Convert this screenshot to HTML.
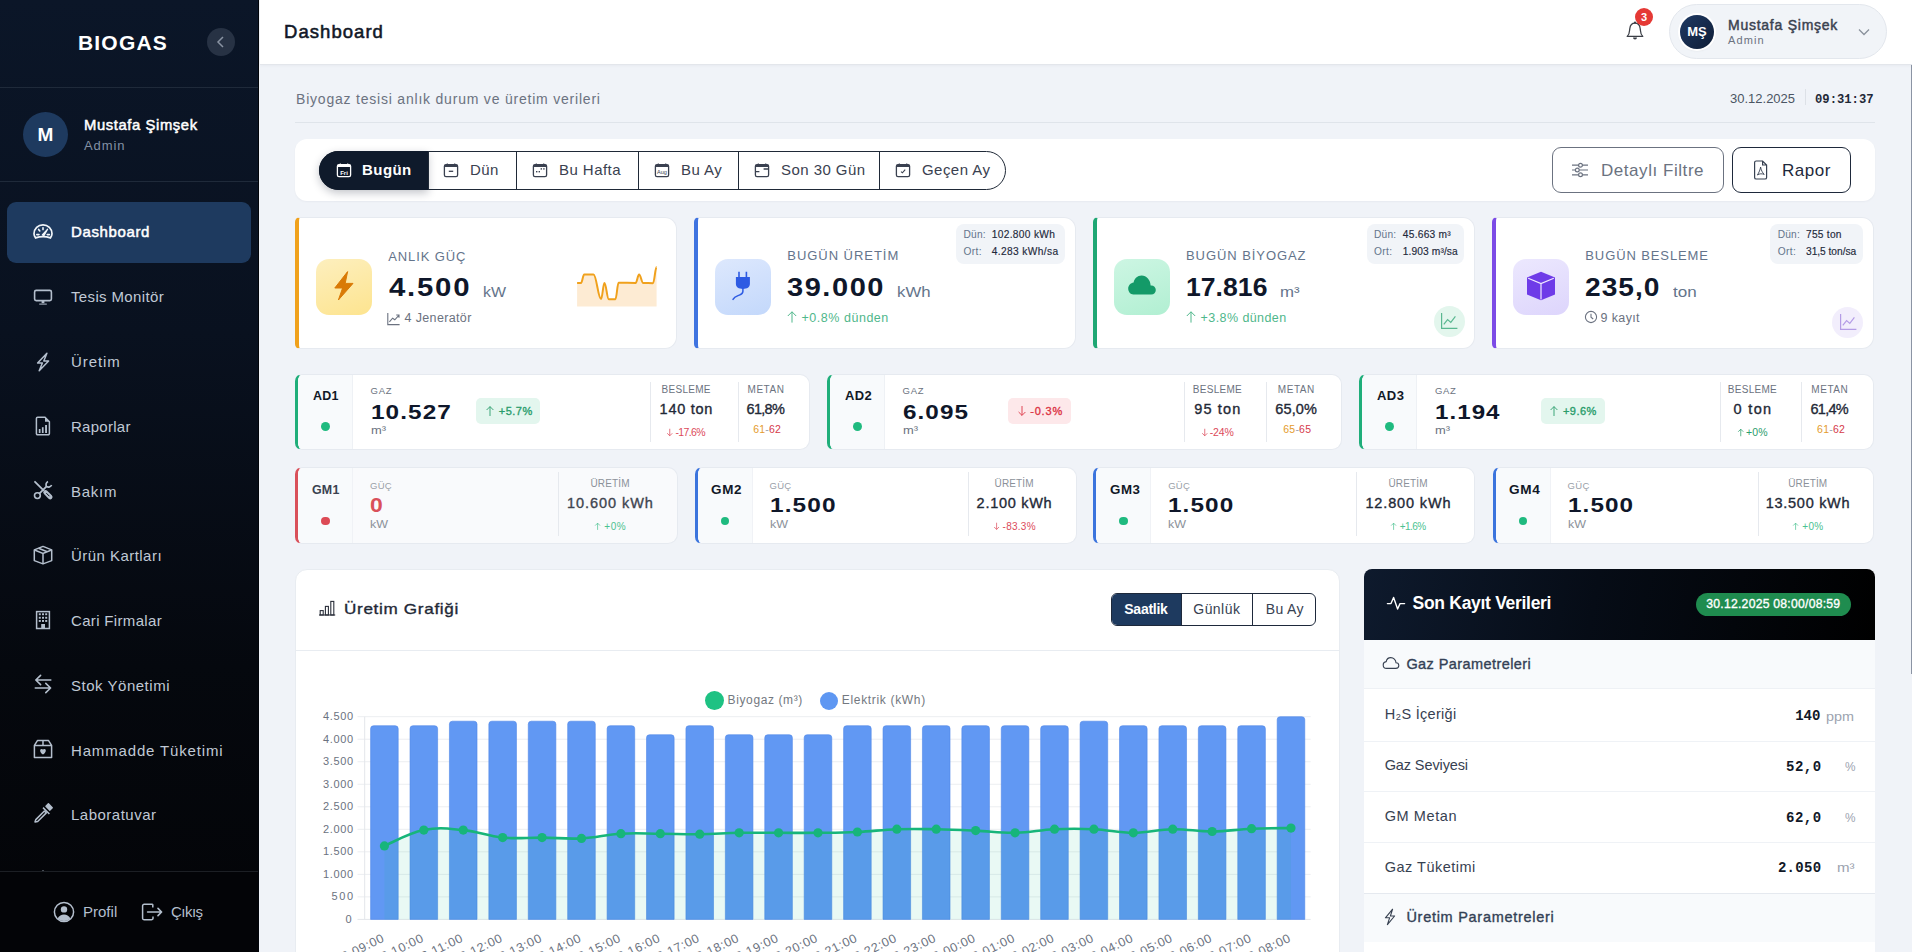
<!DOCTYPE html>
<html lang="tr">
<head>
<meta charset="utf-8">
<title>Dashboard</title>
<style>
*{box-sizing:border-box;margin:0;padding:0}
html,body{width:1912px;height:952px;overflow:hidden}
body{font-family:"Liberation Sans",sans-serif;background:#f0f3f8;color:#0f172a;position:relative}
.abs{position:absolute}
/* sidebar */
#sb{position:absolute;left:0;top:0;width:259px;height:952px;background:linear-gradient(180deg,#0b1628 0%,#09111f 35%,#05080e 70%,#030407 100%);border-right:1px solid #02050a;overflow:hidden}
#sb .logo{position:absolute;left:0;top:31px;width:246px;text-align:center;color:#fff;font-weight:bold;font-size:21px;letter-spacing:1.2px}
#sb .coll{position:absolute;left:207px;top:28px;width:28px;height:28px;border-radius:50%;background:#273244}
#sb .hr{position:absolute;left:0;width:259px;height:1px;background:#1f2a3a}
#sb .av{position:absolute;left:23px;top:112px;width:45px;height:45px;border-radius:50%;background:#1e3a5f;color:#fff;font-weight:bold;font-size:19px;text-align:center;line-height:45px}
#sb .nm{position:absolute;left:84px;top:117px;color:#fff;font-size:14.8px;-webkit-text-stroke:0.5px #fff;white-space:nowrap;letter-spacing:0.6px}
#sb .rl{position:absolute;left:84px;top:138px;color:#8391a4;font-size:13px;letter-spacing:0.9px}
.nav{position:absolute;left:7px;width:244px;height:61px;border-radius:9px}
.nav.act{background:#1e3a5f}
.nav svg{position:absolute;left:26px;top:20px}
.nav span{position:absolute;left:64px;top:21px;font-size:15px;color:#c4cdd8;white-space:nowrap}
.nav.act span{color:#fff;font-weight:bold}
#sb .foot{position:absolute;left:0;top:871px;width:259px;height:81px;background:#030407;border-top:1px solid #1c1f24}

#sb .actbg{position:absolute;left:7px;top:202px;width:244px;height:61px;border-radius:9px;background:#1e3a5f}
#sb .ic{position:absolute}
#sb .nt{position:absolute;left:71px;font-size:15px;line-height:19px;color:#c0c9d5;white-space:nowrap;letter-spacing:0.3px}
#sb .nt.a{letter-spacing:0}
#sb .nt.a{color:#fff;font-weight:normal;-webkit-text-stroke:0.5px #fff}
#sb .ft{position:absolute;font-size:15px;line-height:19px;color:#b4bfcd}
/* topbar */
#tb{position:absolute;left:260px;top:0;width:1652px;height:65px;background:#fff;border-bottom:1px solid #e3e6eb;box-shadow:0 1px 3px rgba(15,23,42,.04);z-index:1}

#tb .ttl{position:absolute;left:24px;top:20.5px;font-size:18.5px;line-height:22px;color:#111827;-webkit-text-stroke:0.55px #111827;letter-spacing:1.05px}
#tb .bell{position:absolute;left:1365px;top:17.5px}
#tb .badge{position:absolute;left:1375px;top:8px;width:18px;height:18px;border-radius:50%;background:#e53935;color:#fff;font-size:11px;font-weight:bold;text-align:center;line-height:18px}
#tb .pill{position:absolute;left:1409px;top:4px;width:218px;height:55px;border-radius:28px;background:#f1f4f8;border:1px solid #e3e7ed}
#tb .pav{position:absolute;left:10px;top:10px;width:34px;height:34px;border-radius:50%;background:linear-gradient(135deg,#1e3a64,#0f1d36);color:#fff;font-weight:bold;font-size:13px;text-align:center;line-height:34px;box-shadow:0 0 0 2px #fff,0 1px 3px rgba(0,0,0,.15)}
#tb .pnm{position:absolute;left:58px;top:11.5px;font-size:14px;line-height:16px;color:#3a4250;-webkit-text-stroke:0.45px #3a4250;white-space:nowrap;letter-spacing:0.75px}
#tb .prl{position:absolute;left:58px;top:28.5px;font-size:11px;line-height:13px;color:#6b7280;letter-spacing:1.1px}
.sub{position:absolute;left:296px;top:91px;font-size:14px;line-height:16px;color:#6b7280;letter-spacing:0.79px}
.dt{position:absolute;left:1730px;top:91px;font-size:13px;line-height:15px;color:#4b5563}
.dsep{position:absolute;left:1805px;top:89px;width:1px;height:16px;background:#dde1e7}
.tm{position:absolute;left:1815px;top:92.5px;font-family:"Liberation Mono",monospace;font-weight:bold;font-size:12.2px;line-height:15px;color:#1f2937}
.hdiv{position:absolute;left:295px;top:122px;width:1580px;height:1px;background:#dfe4ea}
.card{position:absolute;background:#fff;border-radius:12px;border:1px solid #e6eaf0}


.t{position:absolute;white-space:nowrap}
.kc{position:absolute;top:217px;width:382px;height:132px;background:#fff;border-radius:5px 12px 12px 5px;border:1px solid #e6eaf0;border-left:4px solid #f59e0b}
.kib{position:absolute;top:259px;width:56px;height:56px;border-radius:13px}
.kinfo{position:absolute;top:224px;height:40px;border-radius:8px;background:#f1f4f8}
.ktr{position:absolute;width:31px;height:31px;border-radius:50%}

.adc{position:absolute;top:374px;height:76px;background:#fff;border-radius:7px 10px 10px 7px;border:1px solid #e6eaf0;border-left:3px solid #1fae7a;overflow:hidden}
.adn{position:absolute;left:0;top:0;width:55px;height:100%;background:#f8fafc;border-right:1px solid #eef1f5}
.gmc{position:absolute;top:467px;height:77px;background:#fff;border-radius:7px 10px 10px 7px;border:1px solid #e6eaf0;border-left:3px solid #3b74dd;overflow:hidden}
.vdiv{position:absolute;width:1px;background:#e6e9ee}
.dot{position:absolute;width:9px;height:9px;border-radius:50%}

.ccard{position:absolute;left:295px;top:569px;width:1045px;height:400px;background:#fff;border-radius:12px;border:1px solid #e8ecf1}
.panel{position:absolute;left:1364px;top:569px;width:511px;height:400px;background:#fff;border-radius:8px;overflow:hidden}
/*KPICSS*/
.ftx{position:absolute;top:161px;font-size:15px;line-height:18px;white-space:nowrap;letter-spacing:0.45px}
#main{position:absolute;left:260px;top:65px;width:1652px;height:887px;background:#f0f3f8}
</style>
</head>
<body>
<div id="sb">
  <div class="logo">BIOGAS</div>
  <div class="coll"><svg width="28" height="28" viewBox="0 0 28 28"><path d="M16 9 L11 14 L16 19" fill="none" stroke="#8a94a3" stroke-width="1.5"/></svg></div>
  <div class="hr" style="top:87px"></div>
  <div class="av">M</div>
  <div class="nm">Mustafa Şimşek</div>
  <div class="rl">Admin</div>
  <div class="hr" style="top:181px"></div>
  <div class="actbg"></div>
<svg class="ic" style="left:28px;top:216.0px" width="30" height="30" viewBox="0 0 30 30"><path d="M7.6,21.9 C6.5,20.4 6,19.2 6,17.8 A9,9 0 0 1 24,17.8 C24,19.2 23.5,20.4 22.4,21.9 C17.5,20.2 12.5,20.2 7.6,21.9 Z" fill="none" stroke="#f1f5f9" stroke-width="1.7"/><path d="M15,11.8 V13.6 M10.6,13.4 L11.8,14.9 M8.8,18.6 H11 M19.2,18.6 H21.4" stroke="#f1f5f9" stroke-width="1.6" stroke-linecap="round"/><path d="M14.3,19 L19.6,13.2 L15.9,19.6 Z" fill="#f1f5f9" stroke="#f1f5f9" stroke-width="1.2" stroke-linejoin="round"/></svg>
<div class="nt a" style="top:221.5px;letter-spacing:0.62px">Dashboard</div>
<svg class="ic" style="left:28px;top:280.8px" width="30" height="30" viewBox="0 0 30 30"><rect x="6.6" y="9.4" width="16.8" height="10.2" rx="1.6" fill="none" stroke="#b4bfcd" stroke-width="1.6"/><path d="M13.6,20 H16.4 V22.2 H13.6 Z" fill="#b4bfcd"/><path d="M11.2,22.6 H18.8 V23.6 H11.2 Z" fill="#b4bfcd"/></svg>
<div class="nt" style="top:287.2px;letter-spacing:0.36px">Tesis Monitör</div>
<svg class="ic" style="left:28px;top:345.5px" width="30" height="30" viewBox="0 0 30 30"><path d="M18.9,7.2 L9.6,17 H14.4 L11.2,24.8 L20.6,15 H15.8 Z" fill="none" stroke="#b4bfcd" stroke-width="1.5" stroke-linejoin="round"/></svg>
<div class="nt" style="top:352.0px;letter-spacing:0.91px">Üretim</div>
<svg class="ic" style="left:28px;top:410.2px" width="30" height="30" viewBox="0 0 30 30"><path d="M9.6,7.3 H17 L21.4,11.8 V23.6 A1.2,1.2 0 0 1 20.2,24.8 H9.6 A1.2,1.2 0 0 1 8.4,23.6 V8.5 A1.2,1.2 0 0 1 9.6,7.3 Z" fill="none" stroke="#b4bfcd" stroke-width="1.5"/><path d="M17,7.3 V11.8 H21.4 Z" fill="#b4bfcd"/><rect x="10.8" y="19" width="1.7" height="4" fill="#b4bfcd"/><rect x="13.9" y="17.2" width="1.7" height="5.8" fill="#b4bfcd"/><rect x="17.1" y="15" width="1.9" height="8" fill="#b4bfcd"/></svg>
<div class="nt" style="top:416.8px;letter-spacing:0.28px">Raporlar</div>
<svg class="ic" style="left:28px;top:475.0px" width="30" height="30" viewBox="0 0 30 30"><path d="M7,6.8 L15.6,15.4" stroke="#b4bfcd" stroke-width="1.8" stroke-linecap="round"/><path d="M17.6,17.4 L22.2,22" stroke="#b4bfcd" stroke-width="4.6" stroke-linecap="round"/><path d="M18.6,18.4 L21.2,21" stroke="#070d18" stroke-width="1" stroke-linecap="round"/><path d="M11.3,18.7 L18.8,11.2" stroke="#b4bfcd" stroke-width="1.8"/><circle cx="9.4" cy="20.6" r="2.9" fill="none" stroke="#b4bfcd" stroke-width="1.6"/><path d="M20,6.4 A3.6,3.6 0 0 0 18.6,11.6 A3.6,3.6 0 0 0 23.6,10" fill="none" stroke="#b4bfcd" stroke-width="1.7"/></svg>
<div class="nt" style="top:481.5px;letter-spacing:0.75px">Bakım</div>
<svg class="ic" style="left:28px;top:539.8px" width="30" height="30" viewBox="0 0 30 30"><path d="M15,6.4 L23.7,9.9 V20.6 L15,23.9 L6.3,20.6 V9.9 Z" fill="none" stroke="#b4bfcd" stroke-width="1.5" stroke-linejoin="round"/><path d="M6.5,10 L15,13.5 L23.5,10 M15,13.5 V23.8 M10.6,8.2 L19.2,11.7" fill="none" stroke="#b4bfcd" stroke-width="1.5"/></svg>
<div class="nt" style="top:546.2px;letter-spacing:0.46px">Ürün Kartları</div>
<svg class="ic" style="left:28px;top:604.5px" width="30" height="30" viewBox="0 0 30 30"><rect x="8.6" y="6.6" width="12.8" height="16.9" fill="none" stroke="#b4bfcd" stroke-width="1.5"/><g fill="#b4bfcd"><rect x="10.8" y="8.3" width="2" height="1.9"/><rect x="14" y="8.3" width="2" height="1.9"/><rect x="17.2" y="8.3" width="2" height="1.9"/><rect x="10.8" y="11.8" width="2" height="1.9"/><rect x="14" y="11.8" width="2" height="1.9"/><rect x="17.2" y="11.8" width="2" height="1.9"/><rect x="10.8" y="15" width="2" height="1.9"/><rect x="14" y="15" width="2" height="1.9"/><rect x="17.2" y="15" width="2" height="1.9"/><rect x="13.2" y="19" width="3.8" height="4.5"/></g></svg>
<div class="nt" style="top:611.0px;letter-spacing:0.33px">Cari Firmalar</div>
<svg class="ic" style="left:28px;top:669.2px" width="30" height="30" viewBox="0 0 30 30"><path d="M22.8,11 H7.8 M12.6,6.4 L7.8,11 L12.6,15.6 M7.3,19 H22.6 M17.8,14.4 L22.6,19 L17.8,23.6" fill="none" stroke="#b4bfcd" stroke-width="1.6" stroke-linecap="round" stroke-linejoin="round"/></svg>
<div class="nt" style="top:675.8px;letter-spacing:0.52px">Stok Yönetimi</div>
<svg class="ic" style="left:28px;top:734.0px" width="30" height="30" viewBox="0 0 30 30"><path d="M6.4,11.4 L9.6,6.4 H20.4 L23.6,11.4 V23.6 H6.4 Z M6.4,11.4 H23.6 M15,6.4 V11.4" fill="none" stroke="#b4bfcd" stroke-width="1.5" stroke-linejoin="round"/><path d="M15,20.6 C11.4,18.2 11.6,15 13.6,15 C14.4,15 15,15.6 15,16.2 C15,15.6 15.6,15 16.4,15 C18.4,15 18.6,18.2 15,20.6 Z" fill="#b4bfcd"/></svg>
<div class="nt" style="top:740.5px;letter-spacing:0.84px">Hammadde Tüketimi</div>
<svg class="ic" style="left:28px;top:798.8px" width="30" height="30" viewBox="0 0 30 30"><path d="M7,22.9 L7.8,20.6 L16.4,12 L18.3,13.9 L9.7,22.5 Z" fill="none" stroke="#b4bfcd" stroke-width="1.5" stroke-linejoin="round"/><path d="M15,8.6 L21.4,15 M18,7.2 L20.4,4.9 L24.2,8.7 L21.9,11.1 Z" fill="#b4bfcd" stroke="#b4bfcd" stroke-width="1.5" stroke-linejoin="round"/></svg>
<div class="nt" style="top:805.2px;letter-spacing:0.49px">Laboratuvar</div>
  <svg class="ic" style="left:28px;top:864px" width="30" height="30" viewBox="0 0 30 30"><path d="M15,6.5 V9" stroke="#b4bfcd" stroke-width="1.5"/></svg>
  <div class="foot">
    <svg style="position:absolute;left:53px;top:29px" width="22" height="22" viewBox="0 0 22 22"><circle cx="11" cy="11" r="9.6" fill="none" stroke="#b4bfcd" stroke-width="1.5"/><circle cx="11" cy="8.4" r="3.2" fill="#b4bfcd"/><path d="M4.6,17.6 C6,14.6 8.4,13.4 11,13.4 C13.6,13.4 16,14.6 17.4,17.6 A9.4,9.4 0 0 1 4.6,17.6 Z" fill="#b4bfcd"/></svg>
    <div class="ft" style="left:83px;top:30px;letter-spacing:0.01px">Profil</div>
    <svg style="position:absolute;left:141px;top:31px" width="24" height="18" viewBox="0 0 24 18"><path d="M11,2 V1.2 H3.2 A1.6,1.6 0 0 0 1.6,2.8 V15.2 A1.6,1.6 0 0 0 3.2,16.8 H10.4 A1.6,1.6 0 0 0 12,15.2 V13.4 M11.8,1.2 V4.6" fill="none" stroke="#b4bfcd" stroke-width="1.5"/><path d="M6.6,9 H20.4 M17,5.4 L20.6,9 L17,12.6" fill="none" stroke="#b4bfcd" stroke-width="1.6" stroke-linecap="round" stroke-linejoin="round"/></svg>
    <div class="ft" style="left:171px;top:30px;letter-spacing:-0.54px">Çıkış</div>
  </div>
</div>
<div id="tb">
  <div class="ttl">Dashboard</div>
  <svg class="bell" width="20" height="24" viewBox="0 0 20 24"><path d="M2.2,18.4 C3.6,17.2 4.4,15.6 4.6,12.2 L4.8,10.6 C5.2,7.2 7.2,5.2 10,5.2 C12.8,5.2 14.8,7.2 15.2,10.6 L15.4,12.2 C15.6,15.6 16.4,17.2 17.8,18.4 Z" fill="none" stroke="#3b3f46" stroke-width="1.25" stroke-linejoin="round"/><circle cx="10" cy="4.6" r="1.1" fill="#3b3f46"/><path d="M8,19.6 A2,2 0 0 0 12,19.6 Z" fill="#3b3f46"/></svg>
  <div class="badge">3</div>
  <div class="pill">
    <div class="pav">MŞ</div>
    <div class="pnm">Mustafa Şimşek</div>
    <div class="prl">Admin</div>
    <svg style="position:absolute;left:188px;top:23px" width="12" height="8" viewBox="0 0 12 8"><path d="M1,1.5 L6,6.5 L11,1.5" fill="none" stroke="#8a919c" stroke-width="1.3"/></svg>
  </div>
</div>
<div id="main"></div>
<div class="sub">Biyogaz tesisi anlık durum ve üretim verileri</div>
<div class="dt">30.12.2025</div><div class="dsep"></div><div class="tm">09:31:37</div>
<div class="hdiv"></div>
<div class="card" style="left:295px;top:139px;width:1580px;height:62px;border:none;box-shadow:0 1px 2px rgba(15,23,42,.04)"></div>
<div style="position:absolute;left:319px;top:151px;width:687px;height:39px;border:1.3px solid #1f2937;border-radius:20px;overflow:hidden;background:#fff"></div>
<div style="position:absolute;left:319px;top:151px;width:109px;height:39px;border-radius:20px 0 0 20px;background:#0f1a2b;box-shadow:0 3px 8px rgba(15,23,42,.25)"></div>
<div style="position:absolute;left:516px;top:151px;width:1.3px;height:39px;background:#1f2937"></div>
<div style="position:absolute;left:638px;top:151px;width:1.3px;height:39px;background:#1f2937"></div>
<div style="position:absolute;left:738px;top:151px;width:1.3px;height:39px;background:#1f2937"></div>
<div style="position:absolute;left:879px;top:151px;width:1.3px;height:39px;background:#1f2937"></div>
<div style="position:absolute;left:427.5px;top:151px;width:1.3px;height:39px;background:#1f2937"></div>
<svg style="position:absolute;left:330px;top:158px" width="30" height="24" viewBox="0 0 30 24"><rect x="7.4" y="6.6" width="13.2" height="12" rx="1.6" fill="none" stroke="#fff" stroke-width="1.3"/><path d="M7.4,8.2 A1.6,1.6 0 0 1 9,6.6 H19 A1.6,1.6 0 0 1 20.6,8.2 V8.9 H7.4 Z" fill="#fff"/><path d="M10.3,5.4 V6.6 M17.7,5.4 V6.6" stroke="#fff" stroke-width="1.2"/><text x="14" y="16.6" font-family="Liberation Sans" font-size="6" font-weight="bold" fill="#fff" text-anchor="middle">Fri</text></svg>
<svg style="position:absolute;left:437px;top:158px" width="30" height="24" viewBox="0 0 30 24"><rect x="7.4" y="6.6" width="13.2" height="12" rx="1.6" fill="none" stroke="#3a4150" stroke-width="1.3"/><path d="M7.4,8.2 A1.6,1.6 0 0 1 9,6.6 H19 A1.6,1.6 0 0 1 20.6,8.2 V8.9 H7.4 Z" fill="#3a4150"/><path d="M10.3,5.4 V6.6 M17.7,5.4 V6.6" stroke="#3a4150" stroke-width="1.2"/><path d="M11.8,13.3 H16.2" stroke="#3a4150" stroke-width="1.3"/></svg>
<svg style="position:absolute;left:526px;top:158px" width="30" height="24" viewBox="0 0 30 24"><rect x="7.4" y="6.6" width="13.2" height="12" rx="1.6" fill="none" stroke="#3a4150" stroke-width="1.3"/><path d="M7.4,8.2 A1.6,1.6 0 0 1 9,6.6 H19 A1.6,1.6 0 0 1 20.6,8.2 V8.9 H7.4 Z" fill="#3a4150"/><path d="M10.3,5.4 V6.6 M17.7,5.4 V6.6" stroke="#3a4150" stroke-width="1.2"/><g fill="#3a4150"><rect x="14.6" y="10.2" width="1.4" height="1.4"/><rect x="17.2" y="10.2" width="1.4" height="1.4"/><rect x="10" y="13" width="1.4" height="1.4"/><rect x="12.6" y="13" width="1.4" height="1.4"/></g></svg>
<svg style="position:absolute;left:648px;top:158px" width="30" height="24" viewBox="0 0 30 24"><rect x="7.4" y="6.6" width="13.2" height="12" rx="1.6" fill="none" stroke="#3a4150" stroke-width="1.3"/><path d="M7.4,8.2 A1.6,1.6 0 0 1 9,6.6 H19 A1.6,1.6 0 0 1 20.6,8.2 V8.9 H7.4 Z" fill="#3a4150"/><path d="M10.3,5.4 V6.6 M17.7,5.4 V6.6" stroke="#3a4150" stroke-width="1.2"/><text x="14" y="15.6" font-family="Liberation Sans" font-size="5.6" fill="#3a4150" text-anchor="middle">Aug</text></svg>
<svg style="position:absolute;left:748px;top:158px" width="30" height="24" viewBox="0 0 30 24"><rect x="7.4" y="6.6" width="13.2" height="12" rx="1.6" fill="none" stroke="#3a4150" stroke-width="1.3"/><path d="M7.4,8.2 A1.6,1.6 0 0 1 9,6.6 H19 A1.6,1.6 0 0 1 20.6,8.2 V8.9 H7.4 Z" fill="#3a4150"/><path d="M10.3,5.4 V6.6 M17.7,5.4 V6.6" stroke="#3a4150" stroke-width="1.2"/><path d="M15.6,11 H20.6 M7.4,13.6 H11.4" stroke="#3a4150" stroke-width="1.3"/></svg>
<svg style="position:absolute;left:889px;top:158px" width="30" height="24" viewBox="0 0 30 24"><rect x="7.4" y="6.6" width="13.2" height="12" rx="1.6" fill="none" stroke="#3a4150" stroke-width="1.3"/><path d="M7.4,8.2 A1.6,1.6 0 0 1 9,6.6 H19 A1.6,1.6 0 0 1 20.6,8.2 V8.9 H7.4 Z" fill="#3a4150"/><path d="M10.3,5.4 V6.6 M17.7,5.4 V6.6" stroke="#3a4150" stroke-width="1.2"/><path d="M12,13.6 L13.4,14.8 L16.2,11.6" fill="none" stroke="#3a4150" stroke-width="1.1"/></svg>
<div class="ftx" style="left:362px;color:#fff;font-weight:bold">Bugün</div>
<div class="ftx" style="left:470px;color:#3a4150">Dün</div>
<div class="ftx" style="left:559px;color:#3a4150">Bu Hafta</div>
<div class="ftx" style="left:681px;color:#3a4150">Bu Ay</div>
<div class="ftx" style="left:781px;color:#3a4150">Son 30 Gün</div>
<div class="ftx" style="left:922px;color:#3a4150">Geçen Ay</div>
<div style="position:absolute;left:1552px;top:147px;width:172px;height:46px;border:1px solid #6b7280;border-radius:9px;background:#fff"></div>
<svg style="position:absolute;left:1570px;top:160px" width="20" height="20" viewBox="0 0 20 20"><g fill="none" stroke="#6b7280" stroke-width="1.2"><path d="M2,5.2 H8.6 M12.4,5.2 H18 M2,10 H5.4 M9.2,10 H18 M2,14.8 H8.6 M12.4,14.8 H18"/><circle cx="10.5" cy="5.2" r="1.9"/><circle cx="7.3" cy="10" r="1.9"/><circle cx="10.5" cy="14.8" r="1.9"/></g></svg>
<div class="ftx" style="left:1601px;top:161.5px;font-size:17px;color:#6b7280;letter-spacing:0.55px">Detaylı Filtre</div>
<div style="position:absolute;left:1732px;top:147px;width:119px;height:46px;border:1.3px solid #1e293b;border-radius:9px;background:#fff"></div>
<svg style="position:absolute;left:1752px;top:159px" width="18" height="22" viewBox="0 0 18 22"><path d="M4.2,2 H10.6 L14.6,6 V18.4 A1.6,1.6 0 0 1 13,20 H4.2 A1.6,1.6 0 0 1 2.6,18.4 V3.6 A1.6,1.6 0 0 1 4.2,2 Z M10.6,2 V6 H14.6" fill="none" stroke="#374151" stroke-width="1.2"/><path d="M8.6,8 C8.2,10.6 7,13.6 5.4,16 M8.6,8 C9,11 10.4,13.6 12.2,15.4 M5.4,16 C7.6,14.4 10,14.6 12.2,15.4" fill="none" stroke="#374151" stroke-width="0.9"/></svg>
<div class="ftx" style="left:1782px;top:161.5px;font-size:17px;color:#1e293b;letter-spacing:0.5px">Rapor</div>
<div class="kc" style="left:295px;border-left-color:#f0a11c"></div>
<div class="kc" style="left:694px;border-left-color:#3f73e0"></div>
<div class="kc" style="left:1093px;border-left-color:#1fa774"></div>
<div class="kc" style="left:1492px;border-left-color:#7c4be6"></div>
<div class="kib" style="left:316px;background:linear-gradient(160deg,#fdefbe,#fde48f)"></div>
<svg style="position:absolute;left:330px;top:268px" width="28" height="36" viewBox="0 0 28 36"><path d="M17.6,3.6 L4.8,20 H12.6 L8.4,32 L23,15.4 H15.2 Z" fill="#d97a06" stroke="#d97a06" stroke-width="1" stroke-linejoin="round"/></svg>
<div class="kib" style="left:715px;background:linear-gradient(160deg,#dde8fd,#c3d8fb)"></div>
<svg style="position:absolute;left:728px;top:268px" width="30" height="36" viewBox="0 0 30 36"><path d="M11,3.8 V9 M18.4,3.8 V9" stroke="#2d5be3" stroke-width="1.6"/><path d="M7.9,9 H21.9 V15.6 C21.9,19.6 19,21 14.9,21 C10.8,21 7.9,19.6 7.9,15.6 Z" fill="#2d5be3"/><path d="M14.9,20.6 V23.6 C14.9,26.4 12.4,26.6 10,27.6 C7.6,28.6 6,29.6 5,31.4" fill="none" stroke="#2d5be3" stroke-width="1.5" stroke-linecap="round"/></svg>
<div class="kib" style="left:1114px;background:linear-gradient(160deg,#cdf6e3,#b1efd2)"></div>
<svg style="position:absolute;left:1126px;top:272px" width="32" height="26" viewBox="0 0 32 26"><path d="M7.4,22.6 H25.2 C28,22.6 29.8,20.6 29.8,18 C29.8,15.4 27.8,13.4 25.2,13.4 H24.6 C24.4,8.2 20.6,3.6 15.6,3.6 C11.4,3.6 8.4,6.6 7.6,10.4 C4.6,10.8 2.2,13.4 2.2,16.6 C2.2,19.8 4.4,22.6 7.4,22.6 Z" fill="#149a68"/></svg>
<div class="kib" style="left:1513px;background:linear-gradient(160deg,#ece8fe,#ddd5fc)"></div>
<svg style="position:absolute;left:1525px;top:270px" width="32" height="32" viewBox="0 0 32 32"><path d="M16,1.8 L30,7.6 V24.4 L16,30.2 L2,24.4 V7.6 Z" fill="#6e3be8"/><path d="M3.2,8.2 L16,13.6 L28.8,8.2 M16,13.6 V29.4" fill="none" stroke="#f1e9ff" stroke-width="1.2"/></svg>
<div class="t" style="left:388.2px;top:248.50px;font-size:13px;line-height:15.6px;color:#64748b;letter-spacing:0.89px">ANLIK GÜÇ</div>
<div class="t" style="left:388.5px;top:271.92px;font-size:26.5px;line-height:31.8px;color:#0f172a;transform:scaleX(1.107);transform-origin:0 0;font-weight:bold;letter-spacing:1.60px">4.500</div>
<div class="t" style="left:482.6px;top:282.80px;font-size:15px;line-height:18.0px;color:#64748b;transform:scaleX(1.062);transform-origin:0 0">kW</div>
<svg style="position:absolute;left:386px;top:312px" width="15" height="14" viewBox="0 0 15 14"><path d="M1.8,1 V12.6 H13.6" fill="none" stroke="#6b7280" stroke-width="1.1"/><path d="M3.4,9.8 L6.6,6.2 L8.8,7.8 L12.8,3.4 M10.2,3 H13 V5.8" fill="none" stroke="#6b7280" stroke-width="1.1"/></svg>
<div class="t" style="left:404.6px;top:311.07px;font-size:12.5px;line-height:15.0px;color:#6b7280;letter-spacing:0.35px">4 Jeneratör</div>
<svg style="position:absolute;left:570px;top:260px" width="95" height="52" viewBox="0 0 95 52"><path d="M7.1,23.0 C8.7,23.0 9.4,23.0 11.0,23.0 C12.3,23.0 12.9,14.5 14.2,14.5 C17.9,14.5 19.8,14.5 23.5,14.5 C26.5,14.5 28.1,39.0 31.1,39.0 C32.4,39.0 33.1,23.0 34.4,23.0 C36.2,23.0 37.0,39.3 38.8,39.3 C41.4,39.3 42.8,39.3 45.4,39.3 C46.7,39.3 47.3,22.7 48.6,22.7 C55.4,22.7 58.8,23.0 65.6,23.0 C67.0,23.0 67.7,14.5 69.1,14.5 C70.7,14.5 71.6,23.0 73.2,23.0 C77.1,23.0 79.1,23.2 83.0,23.2 C84.4,23.2 85.2,7.1 86.6,7.1 L86.6,46.5 L7.1,46.5 Z" fill="#fdebd3"/><path d="M7.1,23.0 C8.7,23.0 9.4,23.0 11.0,23.0 C12.3,23.0 12.9,14.5 14.2,14.5 C17.9,14.5 19.8,14.5 23.5,14.5 C26.5,14.5 28.1,39.0 31.1,39.0 C32.4,39.0 33.1,23.0 34.4,23.0 C36.2,23.0 37.0,39.3 38.8,39.3 C41.4,39.3 42.8,39.3 45.4,39.3 C46.7,39.3 47.3,22.7 48.6,22.7 C55.4,22.7 58.8,23.0 65.6,23.0 C67.0,23.0 67.7,14.5 69.1,14.5 C70.7,14.5 71.6,23.0 73.2,23.0 C77.1,23.0 79.1,23.2 83.0,23.2 C84.4,23.2 85.2,7.1 86.6,7.1" fill="none" stroke="#f0a11c" stroke-width="2" stroke-linejoin="round"/></svg>
<div class="t" style="left:787.3px;top:247.90px;font-size:13px;line-height:15.6px;color:#64748b;letter-spacing:0.96px">BUGÜN ÜRETİM</div>
<div class="t" style="left:787.0px;top:271.72px;font-size:26.5px;line-height:31.8px;color:#0f172a;transform:scaleX(1.095);transform-origin:0 0;font-weight:bold;letter-spacing:1.41px">39.000</div>
<div class="t" style="left:897.1px;top:282.60px;font-size:15px;line-height:18.0px;color:#64748b;transform:scaleX(1.117);transform-origin:0 0">kWh</div>
<svg style="position:absolute;left:786px;top:310px" width="12" height="14" viewBox="0 0 12 14"><path d="M6,12.6 V1.8 M1.8,6 L6,1.8 L10.2,6" fill="none" stroke="#4fb78b" stroke-width="1"/></svg>
<div class="t" style="left:801.5px;top:310.97px;font-size:12.5px;line-height:15.0px;color:#4fb78b;letter-spacing:0.53px">+0.8% dünden</div>
<div class="kinfo" style="left:956.1px;width:109.4px"></div>
<div class="t" style="left:963.6px;top:229.25px;font-size:10.2px;line-height:12.24px;color:#64748b;letter-spacing:0.15px">Dün:</div>
<div class="t" style="left:991.7px;top:229.25px;font-size:10.2px;line-height:12.24px;color:#1e293b;letter-spacing:0.32px;-webkit-text-stroke:0.15px #1e293b">102.800 kWh</div>
<div class="t" style="left:963.6px;top:245.95px;font-size:10.2px;line-height:12.24px;color:#64748b;letter-spacing:0.33px">Ort:</div>
<div class="t" style="left:991.7px;top:245.95px;font-size:10.2px;line-height:12.24px;color:#1e293b;letter-spacing:0.38px;-webkit-text-stroke:0.15px #1e293b">4.283 kWh/sa</div>
<div class="t" style="left:1186.0px;top:247.90px;font-size:13px;line-height:15.6px;color:#64748b;letter-spacing:0.93px">BUGÜN BİYOGAZ</div>
<div class="t" style="left:1186.0px;top:271.72px;font-size:26.5px;line-height:31.8px;color:#0f172a;transform:scaleX(1.002);transform-origin:0 0;font-weight:bold;letter-spacing:0.04px">17.816</div>
<div class="t" style="left:1280.4px;top:282.60px;font-size:15px;line-height:18.0px;color:#64748b;transform:scaleX(1.121);transform-origin:0 0">m³</div>
<svg style="position:absolute;left:1185px;top:310px" width="12" height="14" viewBox="0 0 12 14"><path d="M6,12.6 V1.8 M1.8,6 L6,1.8 L10.2,6" fill="none" stroke="#4fb78b" stroke-width="1"/></svg>
<div class="t" style="left:1200.6px;top:310.97px;font-size:12.5px;line-height:15.0px;color:#4fb78b;letter-spacing:0.42px">+3.8% dünden</div>
<div class="kinfo" style="left:1366.6px;width:97.9px"></div>
<div class="t" style="left:1374.1px;top:229.25px;font-size:10.2px;line-height:12.24px;color:#64748b;letter-spacing:0.15px">Dün:</div>
<div class="t" style="left:1402.8px;top:229.25px;font-size:10.2px;line-height:12.24px;color:#1e293b;letter-spacing:0.26px;-webkit-text-stroke:0.15px #1e293b">45.663 m³</div>
<div class="t" style="left:1374.1px;top:245.95px;font-size:10.2px;line-height:12.24px;color:#64748b;letter-spacing:0.33px">Ort:</div>
<div class="t" style="left:1402.8px;top:245.95px;font-size:10.2px;line-height:12.24px;color:#1e293b;letter-spacing:0.11px;-webkit-text-stroke:0.15px #1e293b">1.903 m³/sa</div>
<div class="ktr" style="left:1433.5px;top:305.5px;background:#e3f6ed"></div><svg style="position:absolute;left:1439.0px;top:311.0px" width="20" height="20" viewBox="0 0 20 20"><path d="M2.6,2 V17.4 H18.4" fill="none" stroke="#5ab891" stroke-width="1.2"/><path d="M4.8,13.4 L8.6,8.6 L11.8,11.4 L16.4,5.4" fill="none" stroke="#5ab891" stroke-width="1.2"/></svg>
<div class="t" style="left:1585.3px;top:247.90px;font-size:13px;line-height:15.6px;color:#64748b;letter-spacing:0.89px">BUGÜN BESLEME</div>
<div class="t" style="left:1585.0px;top:271.72px;font-size:26.5px;line-height:31.8px;color:#0f172a;transform:scaleX(1.062);transform-origin:0 0;font-weight:bold;letter-spacing:0.96px">235,0</div>
<div class="t" style="left:1672.7px;top:282.60px;font-size:15px;line-height:18.0px;color:#64748b;transform:scaleX(1.137);transform-origin:0 0">ton</div>
<svg style="position:absolute;left:1584px;top:310px" width="14" height="14" viewBox="0 0 14 14"><circle cx="7" cy="7" r="5.6" fill="none" stroke="#6b7280" stroke-width="1.1"/><path d="M7,3.8 V7.2 L9.2,9" fill="none" stroke="#6b7280" stroke-width="1.1"/></svg>
<div class="t" style="left:1600.6px;top:310.97px;font-size:12.5px;line-height:15.0px;color:#6b7280;letter-spacing:0.36px">9 kayıt</div>
<div class="kinfo" style="left:1770.3px;width:93.1px"></div>
<div class="t" style="left:1777.8px;top:229.25px;font-size:10.2px;line-height:12.24px;color:#64748b;letter-spacing:0.15px">Dün:</div>
<div class="t" style="left:1806.0px;top:229.25px;font-size:10.2px;line-height:12.24px;color:#1e293b;letter-spacing:0.25px;-webkit-text-stroke:0.15px #1e293b">755 ton</div>
<div class="t" style="left:1777.8px;top:245.95px;font-size:10.2px;line-height:12.24px;color:#64748b;letter-spacing:0.33px">Ort:</div>
<div class="t" style="left:1806.0px;top:245.95px;font-size:10.2px;line-height:12.24px;color:#1e293b;letter-spacing:-0.02px;-webkit-text-stroke:0.15px #1e293b">31,5 ton/sa</div>
<div class="ktr" style="left:1832.0px;top:306.5px;background:#f2eefc"></div><svg style="position:absolute;left:1837.5px;top:312.0px" width="20" height="20" viewBox="0 0 20 20"><path d="M2.6,2 V17.4 H18.4" fill="none" stroke="#b49ce6" stroke-width="1.2"/><path d="M4.8,13.4 L8.6,8.6 L11.8,11.4 L16.4,5.4" fill="none" stroke="#b49ce6" stroke-width="1.2"/></svg>
<div class="adc" style="left:295px;width:515.0px"><div class="adn"></div></div>
<div class="t" style="left:312.5px;top:389.44px;font-size:12px;line-height:14.4px;color:#111827;transform:scaleX(1.041);transform-origin:0 0;font-weight:bold;letter-spacing:0.20px">AD1</div>
<div class="dot" style="left:320.8px;top:421.5px;background:#1fba7f"></div>
<div class="t" style="left:370.5px;top:384.81px;font-size:9.5px;line-height:11.4px;color:#6b7280;letter-spacing:0.74px">GAZ</div>
<div class="t" style="left:370.5px;top:399.59px;font-size:20.3px;line-height:24.36px;color:#0f172a;transform:scaleX(1.200);transform-origin:0 0;font-weight:bold;letter-spacing:0.89px">10.527</div>
<div class="t" style="left:370.8px;top:423.62px;font-size:11.5px;line-height:13.8px;color:#6b7280;transform:scaleX(1.119);transform-origin:0 0">m³</div>
<div style="position:absolute;left:476.4px;top:398.4px;width:63.9px;height:26px;border-radius:5px;background:#e3f6ee"></div>
<svg style="position:absolute;left:485.2px;top:405px" width="10.0" height="12.0" viewBox="0 0 10 12"><path d="M5,11 V1.6 M1.6,5 L5,1.6 L8.4,5" fill="none" stroke="#2a9d6c" stroke-width="0.9"/></svg>
<div class="t" style="left:498.8px;top:405.29px;font-size:11px;line-height:13.2px;color:#2a9d6c;-webkit-text-stroke:0.35px #2a9d6c;letter-spacing:0.48px">+5.7%</div>
<div class="vdiv" style="left:650.4px;top:382px;height:60px"></div>
<div class="vdiv" style="left:737.5px;top:382px;height:60px"></div>
<div class="t" style="left:661.5px;top:383.53px;font-size:10px;line-height:12.0px;color:#6b7280;letter-spacing:0.29px">BESLEME</div>
<div class="t" style="left:659.6px;top:401.38px;font-size:14.5px;line-height:17.4px;color:#1f2937;-webkit-text-stroke:0.35px #1f2937;letter-spacing:0.72px">140 ton</div>
<svg style="position:absolute;left:666.35px;top:427.5px" width="7.5" height="9.0" viewBox="0 0 10 12"><path d="M5,1 V10.4 M1.6,7 L5,10.4 L8.4,7" fill="none" stroke="#dc4a5a" stroke-width="1.0"/></svg>
<div class="t" style="left:675.4px;top:425.96px;font-size:10.5px;line-height:12.6px;color:#dc4a5a;letter-spacing:-0.61px">-17.6%</div>
<div class="t" style="left:747.5px;top:383.53px;font-size:10px;line-height:12.0px;color:#6b7280;letter-spacing:0.56px">METAN</div>
<div class="t" style="left:746.5px;top:401.38px;font-size:14.5px;line-height:17.4px;color:#1f2937;-webkit-text-stroke:0.35px #1f2937;letter-spacing:-0.68px">61,8%</div>
<div class="t" style="left:753.2px;top:422.76px;font-size:10.5px;line-height:12.6px;letter-spacing:0.2px"><span style="color:#e49b2c">61</span><span style="color:#9ca3af">-</span><span style="color:#d63a4a">62</span></div>
<div class="adc" style="left:827px;width:515.0px"><div class="adn"></div></div>
<div class="t" style="left:844.5px;top:389.44px;font-size:12px;line-height:14.4px;color:#111827;transform:scaleX(1.081);transform-origin:0 0;font-weight:bold;letter-spacing:0.39px">AD2</div>
<div class="dot" style="left:852.8px;top:421.5px;background:#1fba7f"></div>
<div class="t" style="left:902.5px;top:384.81px;font-size:9.5px;line-height:11.4px;color:#6b7280;letter-spacing:0.74px">GAZ</div>
<div class="t" style="left:902.5px;top:399.59px;font-size:20.3px;line-height:24.36px;color:#0f172a;transform:scaleX(1.196);transform-origin:0 0;font-weight:bold;letter-spacing:0.89px">6.095</div>
<div class="t" style="left:902.8px;top:423.62px;font-size:11.5px;line-height:13.8px;color:#6b7280;transform:scaleX(1.119);transform-origin:0 0">m³</div>
<div style="position:absolute;left:1007.8px;top:398.4px;width:63.0px;height:26px;border-radius:5px;background:#fde8ea"></div>
<svg style="position:absolute;left:1016.5999999999999px;top:405px" width="10.0" height="12.0" viewBox="0 0 10 12"><path d="M5,1 V10.4 M1.6,7 L5,10.4 L8.4,7" fill="none" stroke="#dc3545" stroke-width="0.9"/></svg>
<div class="t" style="left:1030.2px;top:405.29px;font-size:11px;line-height:13.2px;color:#dc3545;-webkit-text-stroke:0.35px #dc3545;letter-spacing:0.82px">-0.3%</div>
<div class="vdiv" style="left:1184.3px;top:382px;height:60px"></div>
<div class="vdiv" style="left:1266.2px;top:382px;height:60px"></div>
<div class="t" style="left:1192.8px;top:383.53px;font-size:10px;line-height:12.0px;color:#6b7280;letter-spacing:0.29px">BESLEME</div>
<div class="t" style="left:1194.2px;top:401.38px;font-size:14.5px;line-height:17.4px;color:#1f2937;-webkit-text-stroke:0.35px #1f2937;letter-spacing:1.14px">95 ton</div>
<svg style="position:absolute;left:1200.75px;top:427.5px" width="7.5" height="9.0" viewBox="0 0 10 12"><path d="M5,1 V10.4 M1.6,7 L5,10.4 L8.4,7" fill="none" stroke="#dc4a5a" stroke-width="1.0"/></svg>
<div class="t" style="left:1209.8px;top:425.96px;font-size:10.5px;line-height:12.6px;color:#dc4a5a;letter-spacing:-0.17px">-24%</div>
<div class="t" style="left:1277.8px;top:383.53px;font-size:10px;line-height:12.0px;color:#6b7280;letter-spacing:0.56px">METAN</div>
<div class="t" style="left:1275.2px;top:401.38px;font-size:14.5px;line-height:17.4px;color:#1f2937;-webkit-text-stroke:0.35px #1f2937;letter-spacing:0.17px">65,0%</div>
<div class="t" style="left:1283.3px;top:422.76px;font-size:10.5px;line-height:12.6px;letter-spacing:0.2px"><span style="color:#e49b2c">65</span><span style="color:#9ca3af">-</span><span style="color:#d63a4a">65</span></div>
<div class="adc" style="left:1359.4px;width:514.6px"><div class="adn"></div></div>
<div class="t" style="left:1376.9px;top:389.44px;font-size:12px;line-height:14.4px;color:#111827;transform:scaleX(1.087);transform-origin:0 0;font-weight:bold;letter-spacing:0.41px">AD3</div>
<div class="dot" style="left:1385.2px;top:421.5px;background:#1fba7f"></div>
<div class="t" style="left:1434.9px;top:384.81px;font-size:9.5px;line-height:11.4px;color:#6b7280;letter-spacing:0.74px">GAZ</div>
<div class="t" style="left:1434.9px;top:399.59px;font-size:20.3px;line-height:24.36px;color:#0f172a;transform:scaleX(1.190);transform-origin:0 0;font-weight:bold;letter-spacing:0.87px">1.194</div>
<div class="t" style="left:1435.2px;top:423.62px;font-size:11.5px;line-height:13.8px;color:#6b7280;transform:scaleX(1.119);transform-origin:0 0">m³</div>
<div style="position:absolute;left:1540.5px;top:398.4px;width:64.1px;height:26px;border-radius:5px;background:#e3f6ee"></div>
<svg style="position:absolute;left:1549.3px;top:405px" width="10.0" height="12.0" viewBox="0 0 10 12"><path d="M5,11 V1.6 M1.6,5 L5,1.6 L8.4,5" fill="none" stroke="#2a9d6c" stroke-width="0.9"/></svg>
<div class="t" style="left:1562.9px;top:405.29px;font-size:11px;line-height:13.2px;color:#2a9d6c;-webkit-text-stroke:0.35px #2a9d6c;letter-spacing:0.48px">+9.6%</div>
<div class="vdiv" style="left:1719.5px;top:382px;height:60px"></div>
<div class="vdiv" style="left:1801.2px;top:382px;height:60px"></div>
<div class="t" style="left:1727.8px;top:383.53px;font-size:10px;line-height:12.0px;color:#6b7280;letter-spacing:0.29px">BESLEME</div>
<div class="t" style="left:1733.5px;top:401.38px;font-size:14.5px;line-height:17.4px;color:#1f2937;-webkit-text-stroke:0.35px #1f2937;letter-spacing:1.34px">0 ton</div>
<svg style="position:absolute;left:1737.1px;top:427.5px" width="7.5" height="9.0" viewBox="0 0 10 12"><path d="M5,11 V1.6 M1.6,5 L5,1.6 L8.4,5" fill="none" stroke="#2a9d6c" stroke-width="1.0"/></svg>
<div class="t" style="left:1746.1px;top:425.96px;font-size:10.5px;line-height:12.6px;color:#2a9d6c;letter-spacing:0.10px">+0%</div>
<div class="t" style="left:1811.3px;top:383.53px;font-size:10px;line-height:12.0px;color:#6b7280;letter-spacing:0.56px">METAN</div>
<div class="t" style="left:1810.5px;top:401.38px;font-size:14.5px;line-height:17.4px;color:#1f2937;-webkit-text-stroke:0.35px #1f2937;letter-spacing:-0.73px">61,4%</div>
<div class="t" style="left:1817.1px;top:422.76px;font-size:10.5px;line-height:12.6px;letter-spacing:0.2px"><span style="color:#e49b2c">61</span><span style="color:#9ca3af">-</span><span style="color:#d63a4a">62</span></div>
<div class="gmc" style="left:295px;width:382.5px;border-left-color:#d9505a;background:#f9fafc"><div class="adn" style="width:55px;background:#f8fafc;border-right:1px solid #f0f2f6"></div></div>
<div class="t" style="left:311.5px;top:483.14px;font-size:12px;line-height:14.4px;color:#3b4250;transform:scaleX(1.035);transform-origin:0 0;font-weight:bold;letter-spacing:0.19px">GM1</div>
<div class="dot" style="left:321.0px;top:516.5px;width:8.5px;height:8.5px;background:#dc4a55"></div>
<div class="t" style="left:370.0px;top:479.81px;font-size:9.5px;line-height:11.4px;color:#9aa0a8;letter-spacing:0.29px">GÜÇ</div>
<div class="t" style="left:370.0px;top:493.19px;font-size:20.3px;line-height:24.36px;color:#d9505a;transform:scaleX(1.131);transform-origin:0 0;font-weight:bold">0</div>
<div class="t" style="left:370.0px;top:518.09px;font-size:11px;line-height:13.2px;color:#8b9199;transform:scaleX(1.133);transform-origin:0 0">kW</div>
<div class="vdiv" style="left:558.4px;top:472px;height:64px"></div>
<div class="t" style="left:590.5px;top:477.53px;font-size:10px;line-height:12.0px;color:#8b9199;letter-spacing:0.13px">ÜRETİM</div>
<div class="t" style="left:567.1px;top:495.28px;font-size:14.5px;line-height:17.4px;color:#3f4550;-webkit-text-stroke:0.35px #3f4550;letter-spacing:0.93px">10.600 kWh</div>
<svg style="position:absolute;left:594.3000000000001px;top:522px" width="7.2" height="8.6" viewBox="0 0 10 12"><path d="M5,11 V1.6 M1.6,5 L5,1.6 L8.4,5" fill="none" stroke="#4cc290" stroke-width="1.0"/></svg>
<div class="t" style="left:604.3px;top:520.54px;font-size:10px;line-height:12.0px;color:#4cc290;letter-spacing:0.50px">+0%</div>
<div class="gmc" style="left:694.5px;width:382.0px;border-left-color:#3b74dd;background:#fff"><div class="adn" style="width:55px;background:#f8fafc;border-right:1px solid #f0f2f6"></div></div>
<div class="t" style="left:711.0px;top:483.14px;font-size:12px;line-height:14.4px;color:#111827;transform:scaleX(1.121);transform-origin:0 0;font-weight:bold;letter-spacing:0.60px">GM2</div>
<div class="dot" style="left:720.5px;top:516.5px;width:8.5px;height:8.5px;background:#1fba7f"></div>
<div class="t" style="left:769.5px;top:479.81px;font-size:9.5px;line-height:11.4px;color:#9aa0a8;letter-spacing:0.29px">GÜÇ</div>
<div class="t" style="left:769.5px;top:493.19px;font-size:20.3px;line-height:24.36px;color:#0f172a;transform:scaleX(1.204);transform-origin:0 0;font-weight:bold;letter-spacing:0.92px">1.500</div>
<div class="t" style="left:769.5px;top:518.09px;font-size:11px;line-height:13.2px;color:#8b9199;transform:scaleX(1.133);transform-origin:0 0">kW</div>
<div class="vdiv" style="left:967.7px;top:472px;height:64px"></div>
<div class="t" style="left:994.6px;top:477.53px;font-size:10px;line-height:12.0px;color:#8b9199;letter-spacing:0.13px">ÜRETİM</div>
<div class="t" style="left:976.6px;top:495.28px;font-size:14.5px;line-height:17.4px;color:#1f2937;-webkit-text-stroke:0.35px #1f2937;letter-spacing:0.72px">2.100 kWh</div>
<svg style="position:absolute;left:992.6px;top:522px" width="7.2" height="8.6" viewBox="0 0 10 12"><path d="M5,1 V10.4 M1.6,7 L5,10.4 L8.4,7" fill="none" stroke="#dc4a5a" stroke-width="1.0"/></svg>
<div class="t" style="left:1002.6px;top:520.54px;font-size:10px;line-height:12.0px;color:#dc4a5a;letter-spacing:0.26px">-83.3%</div>
<div class="gmc" style="left:1093.2px;width:382.3px;border-left-color:#3b74dd;background:#fff"><div class="adn" style="width:55px;background:#f8fafc;border-right:1px solid #f0f2f6"></div></div>
<div class="t" style="left:1109.7px;top:483.14px;font-size:12px;line-height:14.4px;color:#111827;transform:scaleX(1.108);transform-origin:0 0;font-weight:bold;letter-spacing:0.54px">GM3</div>
<div class="dot" style="left:1119.2px;top:516.5px;width:8.5px;height:8.5px;background:#1fba7f"></div>
<div class="t" style="left:1168.2px;top:479.81px;font-size:9.5px;line-height:11.4px;color:#9aa0a8;letter-spacing:0.29px">GÜÇ</div>
<div class="t" style="left:1168.2px;top:493.19px;font-size:20.3px;line-height:24.36px;color:#0f172a;transform:scaleX(1.199);transform-origin:0 0;font-weight:bold;letter-spacing:0.90px">1.500</div>
<div class="t" style="left:1168.2px;top:518.09px;font-size:11px;line-height:13.2px;color:#8b9199;transform:scaleX(1.133);transform-origin:0 0">kW</div>
<div class="vdiv" style="left:1356.4px;top:472px;height:64px"></div>
<div class="t" style="left:1388.5px;top:477.53px;font-size:10px;line-height:12.0px;color:#8b9199;letter-spacing:0.13px">ÜRETİM</div>
<div class="t" style="left:1365.4px;top:495.28px;font-size:14.5px;line-height:17.4px;color:#1f2937;-webkit-text-stroke:0.35px #1f2937;letter-spacing:0.86px">12.800 kWh</div>
<svg style="position:absolute;left:1389.7px;top:522px" width="7.2" height="8.6" viewBox="0 0 10 12"><path d="M5,11 V1.6 M1.6,5 L5,1.6 L8.4,5" fill="none" stroke="#4cc290" stroke-width="1.0"/></svg>
<div class="t" style="left:1399.7px;top:520.54px;font-size:10px;line-height:12.0px;color:#4cc290;letter-spacing:-0.53px">+1.6%</div>
<div class="gmc" style="left:1492.6px;width:381.4px;border-left-color:#3b74dd;background:#fff"><div class="adn" style="width:55px;background:#f8fafc;border-right:1px solid #f0f2f6"></div></div>
<div class="t" style="left:1509.1px;top:483.14px;font-size:12px;line-height:14.4px;color:#111827;transform:scaleX(1.132);transform-origin:0 0;font-weight:bold;letter-spacing:0.65px">GM4</div>
<div class="dot" style="left:1518.6px;top:516.5px;width:8.5px;height:8.5px;background:#1fba7f"></div>
<div class="t" style="left:1567.6px;top:479.81px;font-size:9.5px;line-height:11.4px;color:#9aa0a8;letter-spacing:0.29px">GÜÇ</div>
<div class="t" style="left:1567.6px;top:493.19px;font-size:20.3px;line-height:24.36px;color:#0f172a;transform:scaleX(1.197);transform-origin:0 0;font-weight:bold;letter-spacing:0.90px">1.500</div>
<div class="t" style="left:1567.6px;top:518.09px;font-size:11px;line-height:13.2px;color:#8b9199;transform:scaleX(1.133);transform-origin:0 0">kW</div>
<div class="vdiv" style="left:1757.5px;top:472px;height:64px"></div>
<div class="t" style="left:1788.2px;top:477.53px;font-size:10px;line-height:12.0px;color:#8b9199;letter-spacing:0.13px">ÜRETİM</div>
<div class="t" style="left:1765.8px;top:495.28px;font-size:14.5px;line-height:17.4px;color:#1f2937;-webkit-text-stroke:0.35px #1f2937;letter-spacing:0.71px">13.500 kWh</div>
<svg style="position:absolute;left:1792.25px;top:522px" width="7.2" height="8.6" viewBox="0 0 10 12"><path d="M5,11 V1.6 M1.6,5 L5,1.6 L8.4,5" fill="none" stroke="#4cc290" stroke-width="1.0"/></svg>
<div class="t" style="left:1802.2px;top:520.54px;font-size:10px;line-height:12.0px;color:#4cc290;letter-spacing:0.35px">+0%</div>
<!--GM-->
<div class="ccard"></div>
<div style="position:absolute;left:296px;top:650px;width:1043px;height:1px;background:#e8ecf1"></div>
<svg style="position:absolute;left:318px;top:600px" width="18" height="16" viewBox="0 0 18 16"><g fill="none" stroke="#2a2f3a" stroke-width="1.1"><path d="M1,15 H17.2"/><rect x="2.2" y="10.6" width="3" height="4.4"/><rect x="7.4" y="6.4" width="3" height="8.6"/><rect x="12.8" y="1.4" width="3" height="13.6"/></g></svg>
<div class="t" style="left:343.9px;top:599.60px;font-size:15px;line-height:18.0px;color:#1f2937;transform:scaleX(1.141);transform-origin:0 0;-webkit-text-stroke:0.35px #1f2937;letter-spacing:0.59px">Üretim Grafiği</div>
<div style="position:absolute;left:1111px;top:593px;width:205px;height:33px;border:1px solid #1e293b;border-radius:6px;background:#fff;overflow:hidden"><div style="position:absolute;left:0;top:0;width:70px;height:100%;background:#1e3a5f"></div></div>
<div style="position:absolute;left:1252px;top:593px;width:1px;height:33px;background:#1e293b"></div>
<div style="position:absolute;left:1180.5px;top:593px;width:1px;height:33px;background:#1e293b"></div>
<div class="t" style="left:1124.3px;top:601.35px;font-size:14px;line-height:16.8px;color:#fff;font-weight:bold;letter-spacing:-0.27px">Saatlik</div>
<div class="t" style="left:1193.3px;top:601.35px;font-size:14px;line-height:16.8px;color:#374151;letter-spacing:0.45px">Günlük</div>
<div class="t" style="left:1265.7px;top:601.35px;font-size:14px;line-height:16.8px;color:#374151;letter-spacing:0.39px">Bu Ay</div>
<div style="position:absolute;left:705px;top:691.3px;width:18.8px;height:18.8px;border-radius:50%;background:#1ec283"></div>
<div class="t" style="left:727.6px;top:693.44px;font-size:12px;line-height:14.4px;color:#737880;letter-spacing:0.61px">Biyogaz (m³)</div>
<div style="position:absolute;left:819.8px;top:691.6px;width:18.2px;height:18.2px;border-radius:50%;background:#5e97f2"></div>
<div class="t" style="left:841.8px;top:693.44px;font-size:12px;line-height:14.4px;color:#737880;letter-spacing:0.67px">Elektrik (kWh)</div>
<div class="t" style="left:323.0px;top:710.19px;font-size:11px;line-height:13.2px;color:#6b7280;letter-spacing:0.62px">4.500</div>
<div class="t" style="left:323.0px;top:732.71px;font-size:11px;line-height:13.2px;color:#6b7280;letter-spacing:0.62px">4.000</div>
<div class="t" style="left:323.0px;top:755.23px;font-size:11px;line-height:13.2px;color:#6b7280;letter-spacing:0.62px">3.500</div>
<div class="t" style="left:323.0px;top:777.76px;font-size:11px;line-height:13.2px;color:#6b7280;letter-spacing:0.62px">3.000</div>
<div class="t" style="left:323.0px;top:800.28px;font-size:11px;line-height:13.2px;color:#6b7280;letter-spacing:0.62px">2.500</div>
<div class="t" style="left:323.0px;top:822.80px;font-size:11px;line-height:13.2px;color:#6b7280;letter-spacing:0.62px">2.000</div>
<div class="t" style="left:323.0px;top:845.32px;font-size:11px;line-height:13.2px;color:#6b7280;letter-spacing:0.62px">1.500</div>
<div class="t" style="left:323.0px;top:867.84px;font-size:11px;line-height:13.2px;color:#6b7280;letter-spacing:0.62px">1.000</div>
<div class="t" style="left:331.5px;top:890.37px;font-size:11px;line-height:13.2px;color:#6b7280;letter-spacing:1.57px">500</div>
<div class="t" style="left:345.5px;top:912.89px;font-size:11px;line-height:13.2px;color:#6b7280">0</div>
<svg style="position:absolute;left:300px;top:700px" width="1040" height="252" viewBox="300 700 1040 252"><path d="M357.5,919.40 H1310.7" stroke="#e3e6ea" stroke-width="1"/><path d="M357.5,896.88 H1310.7" stroke="#eceef1" stroke-width="1"/><path d="M357.5,874.36 H1310.7" stroke="#eceef1" stroke-width="1"/><path d="M357.5,851.83 H1310.7" stroke="#eceef1" stroke-width="1"/><path d="M357.5,829.31 H1310.7" stroke="#eceef1" stroke-width="1"/><path d="M357.5,806.79 H1310.7" stroke="#eceef1" stroke-width="1"/><path d="M357.5,784.27 H1310.7" stroke="#eceef1" stroke-width="1"/><path d="M357.5,761.74 H1310.7" stroke="#eceef1" stroke-width="1"/><path d="M357.5,739.22 H1310.7" stroke="#eceef1" stroke-width="1"/><path d="M357.5,716.70 H1310.7" stroke="#eceef1" stroke-width="1"/><path d="M364.7,716.7 V919.4" stroke="#e3e6ea" stroke-width="1"/><path d="M370.60,919.40 V728.71 Q370.60,725.71 373.60,725.71 H395.20 Q398.20,725.71 398.20,728.71 V919.40 Z" fill="#6198f3" stroke="#4f86e8" stroke-width="0.6"/><path d="M410.02,919.40 V728.71 Q410.02,725.71 413.02,725.71 H434.62 Q437.62,725.71 437.62,728.71 V919.40 Z" fill="#6198f3" stroke="#4f86e8" stroke-width="0.6"/><path d="M449.43,919.40 V724.20 Q449.43,721.20 452.43,721.20 H474.03 Q477.03,721.20 477.03,724.20 V919.40 Z" fill="#6198f3" stroke="#4f86e8" stroke-width="0.6"/><path d="M488.85,919.40 V724.20 Q488.85,721.20 491.85,721.20 H513.45 Q516.45,721.20 516.45,724.20 V919.40 Z" fill="#6198f3" stroke="#4f86e8" stroke-width="0.6"/><path d="M528.27,919.40 V724.20 Q528.27,721.20 531.27,721.20 H552.87 Q555.87,721.20 555.87,724.20 V919.40 Z" fill="#6198f3" stroke="#4f86e8" stroke-width="0.6"/><path d="M567.68,919.40 V724.20 Q567.68,721.20 570.68,721.20 H592.28 Q595.28,721.20 595.28,724.20 V919.40 Z" fill="#6198f3" stroke="#4f86e8" stroke-width="0.6"/><path d="M607.10,919.40 V728.71 Q607.10,725.71 610.10,725.71 H631.70 Q634.70,725.71 634.70,728.71 V919.40 Z" fill="#6198f3" stroke="#4f86e8" stroke-width="0.6"/><path d="M646.52,919.40 V737.72 Q646.52,734.72 649.52,734.72 H671.12 Q674.12,734.72 674.12,737.72 V919.40 Z" fill="#6198f3" stroke="#4f86e8" stroke-width="0.6"/><path d="M685.93,919.40 V728.71 Q685.93,725.71 688.93,725.71 H710.53 Q713.53,725.71 713.53,728.71 V919.40 Z" fill="#6198f3" stroke="#4f86e8" stroke-width="0.6"/><path d="M725.35,919.40 V737.72 Q725.35,734.72 728.35,734.72 H749.95 Q752.95,734.72 752.95,737.72 V919.40 Z" fill="#6198f3" stroke="#4f86e8" stroke-width="0.6"/><path d="M764.77,919.40 V737.72 Q764.77,734.72 767.77,734.72 H789.37 Q792.37,734.72 792.37,737.72 V919.40 Z" fill="#6198f3" stroke="#4f86e8" stroke-width="0.6"/><path d="M804.18,919.40 V737.72 Q804.18,734.72 807.18,734.72 H828.78 Q831.78,734.72 831.78,737.72 V919.40 Z" fill="#6198f3" stroke="#4f86e8" stroke-width="0.6"/><path d="M843.60,919.40 V728.71 Q843.60,725.71 846.60,725.71 H868.20 Q871.20,725.71 871.20,728.71 V919.40 Z" fill="#6198f3" stroke="#4f86e8" stroke-width="0.6"/><path d="M883.02,919.40 V728.71 Q883.02,725.71 886.02,725.71 H907.62 Q910.62,725.71 910.62,728.71 V919.40 Z" fill="#6198f3" stroke="#4f86e8" stroke-width="0.6"/><path d="M922.43,919.40 V728.71 Q922.43,725.71 925.43,725.71 H947.03 Q950.03,725.71 950.03,728.71 V919.40 Z" fill="#6198f3" stroke="#4f86e8" stroke-width="0.6"/><path d="M961.85,919.40 V728.71 Q961.85,725.71 964.85,725.71 H986.45 Q989.45,725.71 989.45,728.71 V919.40 Z" fill="#6198f3" stroke="#4f86e8" stroke-width="0.6"/><path d="M1001.27,919.40 V728.71 Q1001.27,725.71 1004.27,725.71 H1025.87 Q1028.87,725.71 1028.87,728.71 V919.40 Z" fill="#6198f3" stroke="#4f86e8" stroke-width="0.6"/><path d="M1040.68,919.40 V728.71 Q1040.68,725.71 1043.68,725.71 H1065.28 Q1068.28,725.71 1068.28,728.71 V919.40 Z" fill="#6198f3" stroke="#4f86e8" stroke-width="0.6"/><path d="M1080.10,919.40 V724.20 Q1080.10,721.20 1083.10,721.20 H1104.70 Q1107.70,721.20 1107.70,724.20 V919.40 Z" fill="#6198f3" stroke="#4f86e8" stroke-width="0.6"/><path d="M1119.52,919.40 V728.71 Q1119.52,725.71 1122.52,725.71 H1144.12 Q1147.12,725.71 1147.12,728.71 V919.40 Z" fill="#6198f3" stroke="#4f86e8" stroke-width="0.6"/><path d="M1158.93,919.40 V728.71 Q1158.93,725.71 1161.93,725.71 H1183.53 Q1186.53,725.71 1186.53,728.71 V919.40 Z" fill="#6198f3" stroke="#4f86e8" stroke-width="0.6"/><path d="M1198.35,919.40 V728.71 Q1198.35,725.71 1201.35,725.71 H1222.95 Q1225.95,725.71 1225.95,728.71 V919.40 Z" fill="#6198f3" stroke="#4f86e8" stroke-width="0.6"/><path d="M1237.77,919.40 V728.71 Q1237.77,725.71 1240.77,725.71 H1262.37 Q1265.37,725.71 1265.37,728.71 V919.40 Z" fill="#6198f3" stroke="#4f86e8" stroke-width="0.6"/><path d="M1277.18,919.40 V719.70 Q1277.18,716.70 1280.18,716.70 H1301.78 Q1304.78,716.70 1304.78,719.70 V919.40 Z" fill="#6198f3" stroke="#4f86e8" stroke-width="0.6"/><path d="M384.41,845.90 C392.29,842.74 408.06,833.26 423.82,830.10 C439.59,826.94 447.48,828.60 463.24,830.10 C479.01,831.60 486.89,836.10 502.66,837.60 C518.42,839.10 526.31,837.44 542.08,837.60 C557.84,837.76 565.73,839.18 581.49,838.40 C597.26,837.62 605.14,834.64 620.91,833.70 C636.67,832.76 644.56,833.60 660.33,833.70 C676.09,833.80 683.97,834.38 699.74,834.20 C715.51,834.02 723.39,833.08 739.16,832.80 C754.92,832.52 762.81,832.80 778.58,832.80 C794.34,832.80 802.22,832.96 817.99,832.80 C833.76,832.64 841.64,832.72 857.41,832.00 C873.17,831.28 881.06,829.76 896.83,829.20 C912.59,828.64 920.47,828.92 936.24,829.20 C952.01,829.48 959.89,829.88 975.66,830.60 C991.42,831.32 999.31,833.08 1015.08,832.80 C1030.84,832.52 1038.72,829.92 1054.49,829.20 C1070.26,828.48 1078.14,828.48 1093.91,829.20 C1109.67,829.92 1117.56,832.80 1133.33,832.80 C1149.09,832.80 1156.97,829.46 1172.74,829.20 C1188.51,828.94 1196.39,831.60 1212.16,831.50 C1227.92,831.40 1235.81,829.38 1251.58,828.70 C1267.34,828.02 1283.11,828.22 1290.99,828.10 L1290.99,919.4 L384.41,919.4 Z" fill="rgba(16,185,129,0.09)"/><path d="M384.41,845.90 C392.29,842.74 408.06,833.26 423.82,830.10 C439.59,826.94 447.48,828.60 463.24,830.10 C479.01,831.60 486.89,836.10 502.66,837.60 C518.42,839.10 526.31,837.44 542.08,837.60 C557.84,837.76 565.73,839.18 581.49,838.40 C597.26,837.62 605.14,834.64 620.91,833.70 C636.67,832.76 644.56,833.60 660.33,833.70 C676.09,833.80 683.97,834.38 699.74,834.20 C715.51,834.02 723.39,833.08 739.16,832.80 C754.92,832.52 762.81,832.80 778.58,832.80 C794.34,832.80 802.22,832.96 817.99,832.80 C833.76,832.64 841.64,832.72 857.41,832.00 C873.17,831.28 881.06,829.76 896.83,829.20 C912.59,828.64 920.47,828.92 936.24,829.20 C952.01,829.48 959.89,829.88 975.66,830.60 C991.42,831.32 999.31,833.08 1015.08,832.80 C1030.84,832.52 1038.72,829.92 1054.49,829.20 C1070.26,828.48 1078.14,828.48 1093.91,829.20 C1109.67,829.92 1117.56,832.80 1133.33,832.80 C1149.09,832.80 1156.97,829.46 1172.74,829.20 C1188.51,828.94 1196.39,831.60 1212.16,831.50 C1227.92,831.40 1235.81,829.38 1251.58,828.70 C1267.34,828.02 1283.11,828.22 1290.99,828.10" fill="none" stroke="#17b57a" stroke-width="2.6"/><circle cx="384.41" cy="845.90" r="4.6" fill="#17b57a"/><circle cx="423.82" cy="830.10" r="4.6" fill="#17b57a"/><circle cx="463.24" cy="830.10" r="4.6" fill="#17b57a"/><circle cx="502.66" cy="837.60" r="4.6" fill="#17b57a"/><circle cx="542.08" cy="837.60" r="4.6" fill="#17b57a"/><circle cx="581.49" cy="838.40" r="4.6" fill="#17b57a"/><circle cx="620.91" cy="833.70" r="4.6" fill="#17b57a"/><circle cx="660.33" cy="833.70" r="4.6" fill="#17b57a"/><circle cx="699.74" cy="834.20" r="4.6" fill="#17b57a"/><circle cx="739.16" cy="832.80" r="4.6" fill="#17b57a"/><circle cx="778.58" cy="832.80" r="4.6" fill="#17b57a"/><circle cx="817.99" cy="832.80" r="4.6" fill="#17b57a"/><circle cx="857.41" cy="832.00" r="4.6" fill="#17b57a"/><circle cx="896.83" cy="829.20" r="4.6" fill="#17b57a"/><circle cx="936.24" cy="829.20" r="4.6" fill="#17b57a"/><circle cx="975.66" cy="830.60" r="4.6" fill="#17b57a"/><circle cx="1015.08" cy="832.80" r="4.6" fill="#17b57a"/><circle cx="1054.49" cy="829.20" r="4.6" fill="#17b57a"/><circle cx="1093.91" cy="829.20" r="4.6" fill="#17b57a"/><circle cx="1133.33" cy="832.80" r="4.6" fill="#17b57a"/><circle cx="1172.74" cy="829.20" r="4.6" fill="#17b57a"/><circle cx="1212.16" cy="831.50" r="4.6" fill="#17b57a"/><circle cx="1251.58" cy="828.70" r="4.6" fill="#17b57a"/><circle cx="1290.99" cy="828.10" r="4.6" fill="#17b57a"/><text x="381.41" y="933.00" transform="rotate(-26 381.41 933)" font-family="Liberation Sans" font-size="12.5" fill="#6b7280" text-anchor="end" dominant-baseline="hanging" letter-spacing="0.6">29/12 09:00</text><text x="420.82" y="933.00" transform="rotate(-26 420.82 933)" font-family="Liberation Sans" font-size="12.5" fill="#6b7280" text-anchor="end" dominant-baseline="hanging" letter-spacing="0.6">29/12 10:00</text><text x="460.24" y="933.00" transform="rotate(-26 460.24 933)" font-family="Liberation Sans" font-size="12.5" fill="#6b7280" text-anchor="end" dominant-baseline="hanging" letter-spacing="0.6">29/12 11:00</text><text x="499.66" y="933.00" transform="rotate(-26 499.66 933)" font-family="Liberation Sans" font-size="12.5" fill="#6b7280" text-anchor="end" dominant-baseline="hanging" letter-spacing="0.6">29/12 12:00</text><text x="539.08" y="933.00" transform="rotate(-26 539.08 933)" font-family="Liberation Sans" font-size="12.5" fill="#6b7280" text-anchor="end" dominant-baseline="hanging" letter-spacing="0.6">29/12 13:00</text><text x="578.49" y="933.00" transform="rotate(-26 578.49 933)" font-family="Liberation Sans" font-size="12.5" fill="#6b7280" text-anchor="end" dominant-baseline="hanging" letter-spacing="0.6">29/12 14:00</text><text x="617.91" y="933.00" transform="rotate(-26 617.91 933)" font-family="Liberation Sans" font-size="12.5" fill="#6b7280" text-anchor="end" dominant-baseline="hanging" letter-spacing="0.6">29/12 15:00</text><text x="657.33" y="933.00" transform="rotate(-26 657.33 933)" font-family="Liberation Sans" font-size="12.5" fill="#6b7280" text-anchor="end" dominant-baseline="hanging" letter-spacing="0.6">29/12 16:00</text><text x="696.74" y="933.00" transform="rotate(-26 696.74 933)" font-family="Liberation Sans" font-size="12.5" fill="#6b7280" text-anchor="end" dominant-baseline="hanging" letter-spacing="0.6">29/12 17:00</text><text x="736.16" y="933.00" transform="rotate(-26 736.16 933)" font-family="Liberation Sans" font-size="12.5" fill="#6b7280" text-anchor="end" dominant-baseline="hanging" letter-spacing="0.6">29/12 18:00</text><text x="775.58" y="933.00" transform="rotate(-26 775.58 933)" font-family="Liberation Sans" font-size="12.5" fill="#6b7280" text-anchor="end" dominant-baseline="hanging" letter-spacing="0.6">29/12 19:00</text><text x="814.99" y="933.00" transform="rotate(-26 814.99 933)" font-family="Liberation Sans" font-size="12.5" fill="#6b7280" text-anchor="end" dominant-baseline="hanging" letter-spacing="0.6">29/12 20:00</text><text x="854.41" y="933.00" transform="rotate(-26 854.41 933)" font-family="Liberation Sans" font-size="12.5" fill="#6b7280" text-anchor="end" dominant-baseline="hanging" letter-spacing="0.6">29/12 21:00</text><text x="893.83" y="933.00" transform="rotate(-26 893.83 933)" font-family="Liberation Sans" font-size="12.5" fill="#6b7280" text-anchor="end" dominant-baseline="hanging" letter-spacing="0.6">29/12 22:00</text><text x="933.24" y="933.00" transform="rotate(-26 933.24 933)" font-family="Liberation Sans" font-size="12.5" fill="#6b7280" text-anchor="end" dominant-baseline="hanging" letter-spacing="0.6">29/12 23:00</text><text x="972.66" y="933.00" transform="rotate(-26 972.66 933)" font-family="Liberation Sans" font-size="12.5" fill="#6b7280" text-anchor="end" dominant-baseline="hanging" letter-spacing="0.6">30/12 00:00</text><text x="1012.08" y="933.00" transform="rotate(-26 1012.08 933)" font-family="Liberation Sans" font-size="12.5" fill="#6b7280" text-anchor="end" dominant-baseline="hanging" letter-spacing="0.6">30/12 01:00</text><text x="1051.49" y="933.00" transform="rotate(-26 1051.49 933)" font-family="Liberation Sans" font-size="12.5" fill="#6b7280" text-anchor="end" dominant-baseline="hanging" letter-spacing="0.6">30/12 02:00</text><text x="1090.91" y="933.00" transform="rotate(-26 1090.91 933)" font-family="Liberation Sans" font-size="12.5" fill="#6b7280" text-anchor="end" dominant-baseline="hanging" letter-spacing="0.6">30/12 03:00</text><text x="1130.33" y="933.00" transform="rotate(-26 1130.33 933)" font-family="Liberation Sans" font-size="12.5" fill="#6b7280" text-anchor="end" dominant-baseline="hanging" letter-spacing="0.6">30/12 04:00</text><text x="1169.74" y="933.00" transform="rotate(-26 1169.74 933)" font-family="Liberation Sans" font-size="12.5" fill="#6b7280" text-anchor="end" dominant-baseline="hanging" letter-spacing="0.6">30/12 05:00</text><text x="1209.16" y="933.00" transform="rotate(-26 1209.16 933)" font-family="Liberation Sans" font-size="12.5" fill="#6b7280" text-anchor="end" dominant-baseline="hanging" letter-spacing="0.6">30/12 06:00</text><text x="1248.58" y="933.00" transform="rotate(-26 1248.58 933)" font-family="Liberation Sans" font-size="12.5" fill="#6b7280" text-anchor="end" dominant-baseline="hanging" letter-spacing="0.6">30/12 07:00</text><text x="1287.99" y="933.00" transform="rotate(-26 1287.99 933)" font-family="Liberation Sans" font-size="12.5" fill="#6b7280" text-anchor="end" dominant-baseline="hanging" letter-spacing="0.6">30/12 08:00</text></svg>
<div class="panel"></div>
<div style="position:absolute;left:1364px;top:569px;width:511px;height:71px;border-radius:8px 8px 0 0;background:linear-gradient(100deg,#0e1a2d 0%,#060c16 45%,#000 100%)"></div>
<svg style="position:absolute;left:1386px;top:594px" width="20" height="18" viewBox="0 0 20 18"><path d="M1.4,9.6 H5 L7.6,3.4 L11.6,15 L14,9.6 H18.6" fill="none" stroke="#fff" stroke-width="1.4" stroke-linejoin="round" stroke-linecap="round"/></svg>
<div class="t" style="left:1412.6px;top:593.44px;font-size:17.5px;line-height:21.0px;color:#fff;font-weight:bold;letter-spacing:-0.30px">Son Kayıt Verileri</div>
<div style="position:absolute;left:1696.3px;top:593px;width:154.3px;height:23px;border-radius:12px;background:#1f8c4f"></div>
<div class="t" style="left:1706.3px;top:597.05px;font-size:12.2px;line-height:14.64px;color:#fff;-webkit-text-stroke:0.35px #fff;letter-spacing:0.24px">30.12.2025 08:00/08:59</div>
<div style="position:absolute;left:1364px;top:640px;width:511px;height:49px;background:#f8fafc;border-bottom:1px solid #eef1f5"></div>
<svg style="position:absolute;left:1382px;top:656px" width="18" height="14" viewBox="0 0 18 14"><path d="M4.6,12.4 H13.8 C15.6,12.4 16.8,11.2 16.8,9.6 C16.8,8 15.6,6.8 14,6.8 C13.8,4 11.6,1.6 8.8,1.6 C6.4,1.6 4.6,3.4 4.2,5.6 C2.4,5.8 1.2,7.2 1.2,9 C1.2,10.8 2.6,12.4 4.6,12.4 Z" fill="none" stroke="#374151" stroke-width="1.1"/></svg>
<div class="t" style="left:1406.4px;top:656.48px;font-size:14.5px;line-height:17.4px;color:#334155;-webkit-text-stroke:0.35px #334155;letter-spacing:0.42px">Gaz Parametreleri</div>
<div class="t" style="left:1384.7px;top:706.48px;font-size:14.5px;line-height:17.4px;color:#374151;letter-spacing:0.30px">H₂S İçeriği</div>
<div class="t" style="left:1795.3px;top:708.07px;font-size:14px;line-height:16.8px;color:#111827;font-weight:bold;font-family:'Liberation Mono',monospace;letter-spacing:-0.10px">140</div>
<div class="t" style="left:1826.2px;top:708.90px;font-size:13px;line-height:15.6px;color:#9ca3af;transform:scaleX(1.107);transform-origin:0 0">ppm</div>
<div style="position:absolute;left:1364px;top:741px;width:511px;height:1px;background:#eff2f6"></div>
<div class="t" style="left:1384.7px;top:757.28px;font-size:14.5px;line-height:17.4px;color:#374151;letter-spacing:-0.11px">Gaz Seviyesi</div>
<div class="t" style="left:1786.0px;top:758.87px;font-size:14px;line-height:16.8px;color:#111827;font-weight:bold;font-family:'Liberation Mono',monospace;letter-spacing:0.53px">52,0</div>
<div class="t" style="left:1844.5px;top:760.17px;font-size:12.5px;line-height:15.0px;color:#9ca3af;transform:scaleX(0.945);transform-origin:0 0">%</div>
<div style="position:absolute;left:1364px;top:791px;width:511px;height:1px;background:#eff2f6"></div>
<div class="t" style="left:1384.7px;top:807.98px;font-size:14.5px;line-height:17.4px;color:#374151;letter-spacing:0.59px">GM Metan</div>
<div class="t" style="left:1786.0px;top:809.57px;font-size:14px;line-height:16.8px;color:#111827;font-weight:bold;font-family:'Liberation Mono',monospace;letter-spacing:0.53px">62,0</div>
<div class="t" style="left:1844.5px;top:810.87px;font-size:12.5px;line-height:15.0px;color:#9ca3af;transform:scaleX(0.945);transform-origin:0 0">%</div>
<div style="position:absolute;left:1364px;top:842px;width:511px;height:1px;background:#eff2f6"></div>
<div class="t" style="left:1384.7px;top:858.58px;font-size:14.5px;line-height:17.4px;color:#374151;letter-spacing:0.50px">Gaz Tüketimi</div>
<div class="t" style="left:1777.9px;top:860.17px;font-size:14px;line-height:16.8px;color:#111827;font-weight:bold;font-family:'Liberation Mono',monospace;letter-spacing:0.32px">2.050</div>
<div class="t" style="left:1837.4px;top:861.47px;font-size:12.5px;line-height:15.0px;color:#9ca3af;transform:scaleX(1.208);transform-origin:0 0">m³</div>
<div style="position:absolute;left:1364px;top:893px;width:511px;height:1px;background:#eff2f6"></div>
<div style="position:absolute;left:1364px;top:893px;width:511px;height:49px;background:#f8fafc;border-top:1px solid #e5e9ef"></div>
<svg style="position:absolute;left:1383px;top:908px" width="14" height="18" viewBox="0 0 14 18"><path d="M9.6,1.2 L2.4,9.8 H6.6 L4.4,16.6 L11.6,8 H7.4 Z" fill="none" stroke="#374151" stroke-width="1.1" stroke-linejoin="round"/></svg>
<div class="t" style="left:1406.4px;top:909.38px;font-size:14.5px;line-height:17.4px;color:#334155;-webkit-text-stroke:0.35px #334155;letter-spacing:0.72px">Üretim Parametreleri</div>
<div style="position:absolute;left:1911px;top:0;width:1px;height:674px;background:#8b94a4"></div>

</body>
</html>
